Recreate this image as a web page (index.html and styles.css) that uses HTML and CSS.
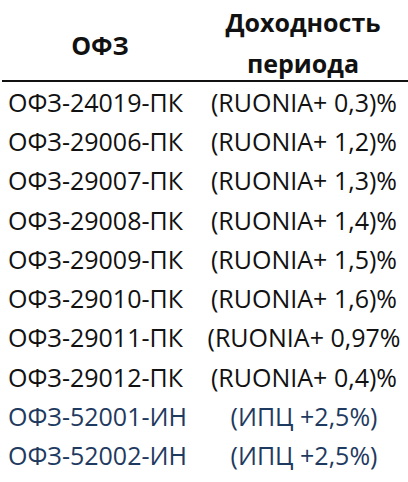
FILE: index.html
```html
<!DOCTYPE html>
<html lang="ru">
<head>
<meta charset="utf-8">
<title>ОФЗ</title>
<link rel="stylesheet" href="styles.css">
</head>
<body>
<div class="table">
  <div class="head">
    <div class="hcell hleft">ОФЗ</div>
    <div class="hcell hright">Доходность<br>периода</div>
  </div>
  <div class="row"><div class="c1">ОФЗ-24019-ПК</div><div class="c2">(RUONIA+ 0,3)%</div></div>
  <div class="row"><div class="c1">ОФЗ-29006-ПК</div><div class="c2">(RUONIA+ 1,2)%</div></div>
  <div class="row"><div class="c1">ОФЗ-29007-ПК</div><div class="c2">(RUONIA+ 1,3)%</div></div>
  <div class="row"><div class="c1">ОФЗ-29008-ПК</div><div class="c2">(RUONIA+ 1,4)%</div></div>
  <div class="row"><div class="c1">ОФЗ-29009-ПК</div><div class="c2">(RUONIA+ 1,5)%</div></div>
  <div class="row"><div class="c1">ОФЗ-29010-ПК</div><div class="c2">(RUONIA+ 1,6)%</div></div>
  <div class="row"><div class="c1">ОФЗ-29011-ПК</div><div class="c2">(RUONIA+ 0,97%</div></div>
  <div class="row"><div class="c1">ОФЗ-29012-ПК</div><div class="c2">(RUONIA+ 0,4)%</div></div>
  <div class="row blue"><div class="c1">ОФЗ-52001-ИН</div><div class="c2">(ИПЦ +2,5%)</div></div>
  <div class="row blue"><div class="c1">ОФЗ-52002-ИН</div><div class="c2">(ИПЦ +2,5%)</div></div>
</div>
</body>
</html>
```
FILE: styles.css
```css
html, body {
  margin: 0;
  padding: 0;
  background: #ffffff;
}
body {
  width: 408px;
  height: 482px;
  overflow: hidden;
  font-family: "Open Sans", "Liberation Sans", sans-serif;
  color: #111111;
}
.table {
  display: flex;
  flex-direction: column;
}
.head {
  display: grid;
  grid-template-columns: 196px 1fr;
  height: 80px;
  border-bottom: 2px solid #111;
  margin-left: 2px;
}
.hcell {
  display: flex;
  align-items: center;
  justify-content: center;
  font-weight: 700;
  font-size: 25px;
  text-align: center;
}
.hleft {
  padding-top: 6px;
}
.hright {
  line-height: 41px;
  padding-top: 2px;
}
.row {
  display: grid;
  grid-template-columns: 200px 1fr;
  height: 39.3px;
  align-items: center;
  font-size: 25px;
}
.c1 {
  padding-left: 8px;
  white-space: nowrap;
}
.c2 {
  text-align: center;
  white-space: nowrap;
}
.blue {
  color: #1f3a60;
}
```
